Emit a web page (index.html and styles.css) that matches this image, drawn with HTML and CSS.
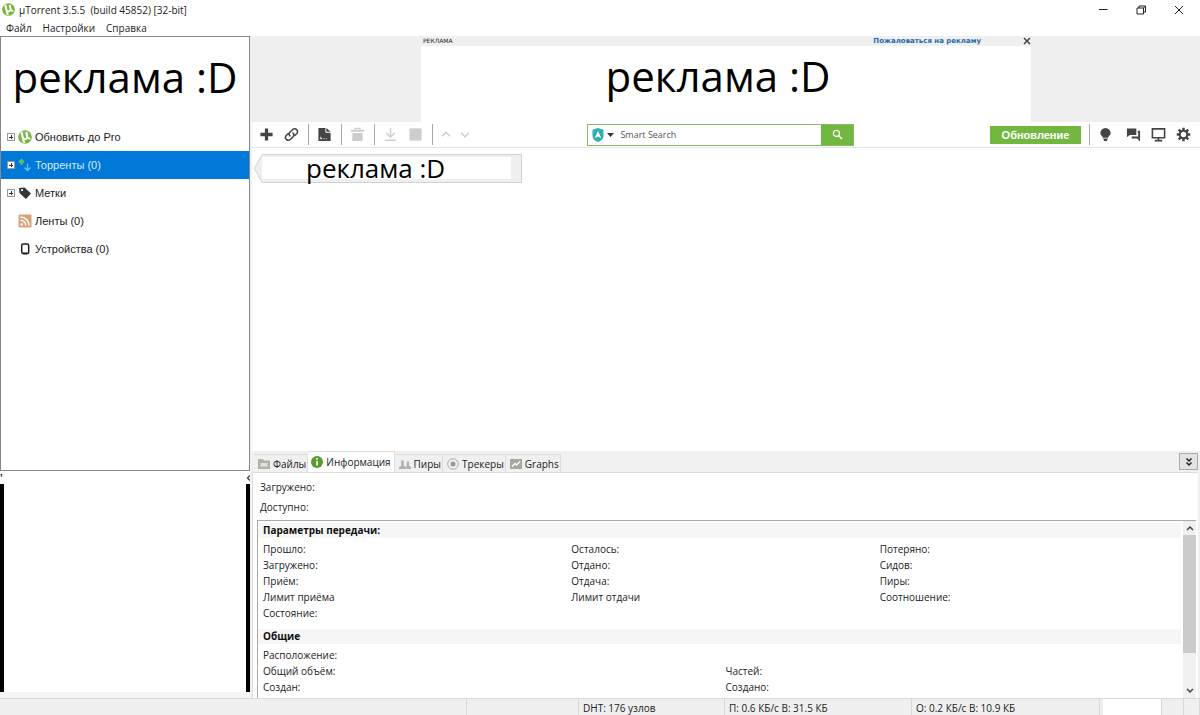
FILE: index.html
```html
<!DOCTYPE html>
<html lang="ru">
<head>
<meta charset="utf-8">
<title>µTorrent 3.5.5</title>
<link rel="stylesheet" href="styles.css">
</head>
<body>
<svg class="defs" aria-hidden="true">
  <symbol id="logo" viewBox="0 0 16 16">
    <circle cx="8" cy="8" r="7.800" fill="#76b83f"/>
    <path d="M2.700 2.600l2.600-.8 1.200 5.900c.3 1.200.9 1.800 1.800 1.600.9-.2 1.100-1 .9-2L8.200 2.700l2.500-.6 1.100 5.200c.2 1 .6 1.500 2 1.500l.6 1.700c-1.800.5-3 .2-3.600-.7-.6 1.300-1.900 2-3.400 1.700l.8 3.500-2.500-.6z" fill="#fff"/>
  </symbol>
</svg>
<div class="app">
  <header class="titlebar">
    <svg class="title-logo"><use href="#logo"/></svg>
    <h1 class="title">µTorrent 3.5.5&nbsp; (build 45852) [32-bit]</h1>
    <div class="window-buttons">
      <button class="window-button" aria-label="Свернуть"><svg viewBox="0 0 10 10"><path d="M1 4.500h8.500"/></svg></button>
      <button class="window-button" aria-label="Развернуть"><svg viewBox="0 0 10 10"><path d="M1 3h6.500v6H1zM3 3V1h6.500v6h-2M7.500 3l2-2"/></svg></button>
      <button class="window-button" aria-label="Закрыть"><svg viewBox="0 0 10 10"><path d="M1 1l8 8M9 1l-8 8"/></svg></button>
    </div>
  </header>
  <nav class="menubar">
    <button class="menu">Файл</button>
    <button class="menu">Настройки</button>
    <button class="menu">Справка</button>
  </nav>
  <div class="body">
    <aside class="left">
      <div class="sidebar">
        <p class="ad-large ad-side">реклама :D</p>
        <ul class="tree">
          <li><button class="node"><span class="expander"></span><svg class="node-icon"><use href="#logo"/></svg>Обновить до Pro</button></li>
          <li><button class="node selected"><span class="expander"></span><svg class="node-icon" viewBox="0 0 14 14"><path d="M3.500 7V2M1 4.500L3.500 2 6 4.500" stroke="#5fbf68" stroke-width="2" fill="none"/><path d="M9.500 5.500V12M6.500 9.500l3 3 3-3" stroke="#6bbdf2" stroke-width="1.300" fill="none"/></svg>Торренты (0)</button></li>
          <li><button class="node"><span class="expander"></span><svg class="node-icon" viewBox="0 0 14 14"><path fill="#30363a" fill-rule="evenodd" d="M1 2l5.500-.5 6.500 6L8 13 1.500 7zM4 3a1 1 0 100 2.200A1 1 0 004 3z"/></svg>Метки</button></li>
          <li><button class="node"><span class="expander none"></span><svg class="node-icon" viewBox="0 0 14 14"><rect x=".5" y=".5" width="13" height="13" rx="1" fill="#d9a27c"/><circle cx="3.700" cy="10.500" r="1.300" fill="#fff"/><path d="M2.500 6.200a5.300 5.300 0 015.300 5.300M2.500 3a8.500 8.500 0 018.500 8.500" stroke="#fff" stroke-width="1.500" fill="none"/></svg>Ленты (0)</button></li>
          <li><button class="node"><span class="expander none"></span><svg class="node-icon" viewBox="0 0 14 14"><rect x="3.700" y="2" width="7" height="9.500" rx="1.500" fill="#fff" stroke="#222" stroke-width="1.500"/><path d="M5 11.500h4.500" stroke="#222" stroke-width="1.800"/></svg>Устройства (0)</button></li>
        </ul>
      </div>
      <div class="side-bottom">
        <div class="side-marks"><span>'</span><svg viewBox="0 0 4 8"><path d="M4 1.500L1.500 4 4 6.500" fill="none" stroke="#444" stroke-width="1.400"/></svg></div>
        <div class="side-frame"></div>
      </div>
    </aside>
    <main class="right">
      <section class="banner">
        <div class="banner-box">
          <div class="banner-head"><span class="banner-tag">РЕКЛАМА</span><a class="banner-link" href="#">Пожаловаться на рекламу</a><button class="banner-close" aria-label="Закрыть рекламу"><svg viewBox="0 0 8 8"><path d="M1 1l6 6M7 1L1 7" stroke="#444" stroke-width="1.500"/></svg></button></div>
          <p class="ad-large ad-banner">реклама :D</p>
        </div>
      </section>
      <div class="toolbar">
        <button class="tool" aria-label="Добавить торрент"><svg viewBox="0 0 16 16"><path d="M8 1.500v13M1.500 8h13" stroke-width="3.500"/></svg></button>
        <button class="tool" aria-label="Добавить ссылку"><svg viewBox="0 0 16 16" class="round"><path stroke-width="1.600" d="M6.500 9.500C5 8 5.300 6.700 6.300 5.700l2.900-3c2.900-2.500 7 1.300 4.400 4.300L11.500 9M9.500 6.500C11 8 10.700 9.300 9.700 10.300l-2.900 3C3.900 15.800-.2 12 2.400 9L4.500 7"/></svg></button>
        <span class="divider"></span>
        <button class="tool" aria-label="Создать торрент"><svg viewBox="0 0 16 16"><path class="fill" d="M1.500 1H9v5h5.500v9h-13zM10 1l4.500 4H10z"/><path d="M4 10.500v2h1.500M7 12.500h1M9.500 12.500h1" stroke="#fff" stroke-width="1"/></svg></button>
        <span class="divider"></span>
        <button class="tool off" aria-label="Удалить" disabled><svg viewBox="0 0 16 16"><path class="fill" d="M2.500 6.500h11V15h-11zM1 3h14v2H1z"/><path d="M5.500 3V1.500h5V3" stroke-width="1.500"/></svg></button>
        <span class="divider"></span>
        <button class="tool off" aria-label="Запустить" disabled><svg viewBox="0 0 16 16"><path d="M8 1v10M3.500 6.500L8 11l4.500-4.500M2 14.200h12" stroke-width="1.500"/></svg></button>
        <button class="tool off" aria-label="Остановить" disabled><svg viewBox="0 0 16 16"><path class="fill" d="M1.500 1.500h13v13h-13z"/></svg></button>
        <span class="divider"></span>
        <button class="tool off small" aria-label="Вверх" disabled><svg viewBox="0 0 16 16"><path d="M3.500 10L8 5.500l4.500 4.500" stroke-width="1.800"/></svg></button>
        <button class="tool off small" aria-label="Вниз" disabled><svg viewBox="0 0 16 16"><path d="M3.500 6L8 10.500 12.500 6" stroke-width="1.800"/></svg></button>
        <span class="gap-before"></span>
        <form class="search">
          <svg class="shield" viewBox="0 0 12 14"><path fill="#31aeb2" d="M6 0l5.500 1.800v6C11.500 11 9 13 6 14 3 13 .5 11 .5 7.800v-6z"/><path fill="#fff" d="M6 3l3.200 7L6 8.500 2.800 10z"/></svg>
          <svg class="caret" viewBox="0 0 7 4"><path d="M0 0h7L3.500 4z" fill="#333"/></svg>
          <input class="search-input" type="text" placeholder="Smart Search" aria-label="Smart Search">
          <button class="search-go" type="button" aria-label="Найти"><svg viewBox="0 0 12 12"><circle cx="4.800" cy="4.800" r="3.300" fill="none" stroke="#fff" stroke-width="1.300"/><path d="M7 7l4 4" stroke="#fff" stroke-width="1.600"/></svg></button>
        </form>
        <span class="gap-after"></span>
        <button class="upgrade">Обновление</button>
        <span class="divider"></span>
        <button class="tool tip" aria-label="Совет"><svg viewBox="0 0 16 16"><path class="fill" d="M8 1a5.500 5.500 0 00-5.500 5.500c0 2.500 2.200 3 2.800 5h5.400c.6-2 2.800-2.500 2.800-5A5.500 5.500 0 008 1zM5.500 12.300h5L9.500 15h-3z"/></svg></button>
        <button class="tool" aria-label="Чат"><svg viewBox="0 0 16 16"><path class="fill" d="M1 1.500h10v7H4L1 11z"/><path d="M12.500 5H14v6.200H6" stroke-width="2"/><path class="fill" d="M11.500 12H15v3.500z"/></svg></button>
        <button class="tool" aria-label="Устройство"><svg viewBox="0 0 16 16"><path d="M1.500 2h13v9.500h-13zM4 14.500h8M8 11.500v3" stroke-width="1.700"/></svg></button>
        <button class="tool" aria-label="Настройки"><svg viewBox="0 0 16 16"><path stroke-width="2.600" d="M8 .8v3M8 12.200v3M.8 8h3M12.200 8h3M2.900 2.900L5 5M11 11l2.100 2.100M2.900 13.100L5 11M11 5l2.100-2.100"/><circle cx="8" cy="8" r="4" fill="#fff" stroke-width="2.200"/></svg></button>
      </div>
      <section class="list">
        <div class="ribbon">
          <svg class="ribbon-tip" viewBox="0 0 8 29" preserveAspectRatio="none"><path d="M8 .5L.5 14.500 8 28.500" fill="#efefef" stroke="#d2d2d2"/></svg>
          <div class="ribbon-frame"><p class="ribbon-text">реклама :D</p></div>
        </div>
      </section>
      <section class="details">
        <div class="tabs">
          <button class="tab"><svg viewBox="0 0 12 12"><path fill="#aeb3a9" d="M0 1h5l1 1.500h6V11H0z"/><path fill="#dfe2dc" d="M2.500 5h7v3.500h-7z"/></svg>Файлы</button>
          <button class="tab active"><svg viewBox="0 0 12 12"><circle cx="6" cy="6" r="6" fill="#599b31"/><path d="M6 2v1.800M6 5v4.500" stroke="#fff" stroke-width="1.600"/></svg>Информация</button>
          <button class="tab"><svg viewBox="0 0 12 12"><path fill="#aeb3a9" d="M0 11V9l2.200-1V2.500h2.500V8L7 9v2zM7.500 11V9L6.700 8.500l1-.7V3.500H10v4.300l2 1.200v2z"/></svg>Пиры</button>
          <button class="tab"><svg viewBox="0 0 12 12"><circle cx="6" cy="6" r="5.300" fill="none" stroke="#aaa"/><circle cx="6" cy="6" r="2.500" fill="#999"/></svg>Трекеры</button>
          <button class="tab"><svg viewBox="0 0 12 12"><path fill="#a3a99f" d="M0 1h12v10H0z"/><path d="M2 8.500l3-3 1.500 1.500L10 3.500" fill="none" stroke="#fff" stroke-width="1.300"/></svg>Graphs</button>
          <button class="collapse" aria-label="Свернуть панель"><svg viewBox="0 0 8 10"><path d="M1.500 1.500L4 4l2.500-2.500M1.500 5.500L4 8l2.500-2.500" fill="none" stroke="#222" stroke-width="1.500"/></svg></button>
        </div>
        <div class="info">
          <p class="progress-label">Загружено:</p>
          <p class="progress-label">Доступно:</p>
          <div class="info-box">
            <div class="info-content">
              <h2 class="info-title">Параметры передачи:</h2>
              <div class="columns three">
                <ul><li>Прошло:</li><li>Загружено:</li><li>Приём:</li><li>Лимит приёма</li><li>Состояние:</li></ul>
                <ul><li>Осталось:</li><li>Отдано:</li><li>Отдача:</li><li>Лимит отдачи</li></ul>
                <ul><li>Потеряно:</li><li>Сидов:</li><li>Пиры:</li><li>Соотношение:</li></ul>
              </div>
              <h2 class="info-title">Общие</h2>
              <div class="columns two">
                <ul><li>Расположение:</li><li>Общий объём:</li><li>Создан:</li></ul>
                <ul><li>&nbsp;</li><li>Частей:</li><li>Создано:</li></ul>
              </div>
            </div>
            <div class="scrollbar">
              <button class="scroll-button" aria-label="Прокрутить вверх"><svg viewBox="0 0 8 6"><path d="M1 5l3-3 3 3"/></svg></button>
              <div class="track"><div class="thumb"></div></div>
              <button class="scroll-button" aria-label="Прокрутить вниз"><svg viewBox="0 0 8 6"><path d="M1 1l3 3 3-3"/></svg></button>
            </div>
          </div>
        </div>
      </section>
    </main>
  </div>
  <footer class="status">
    <span class="cell"></span><span class="cell"></span><span class="cell">DHT: 176 узлов</span><span class="cell">П: 0.6 КБ/с В: 31.5 КБ</span><span class="cell">О: 0.2 КБ/с В: 10.9 КБ</span><span class="cell blank"></span><span class="cell"></span><span class="cell"></span>
  </footer>
</div>
</body>
</html>
```
FILE: styles.css
```css
* { box-sizing: border-box; }
body { margin: 0; background: #fff; color: #222; font: 10px/16px "Open Sans", "Noto Sans", sans-serif; }
button { margin: 0; padding: 0; border: 0; background: none; color: inherit; font: inherit; }
ul, p, h1, h2 { margin: 0; padding: 0; list-style: none; font-size: inherit; }
.defs { display: none; }
.app { display: flex; flex-direction: column; min-height: 100vh; }

.titlebar { display: flex; align-items: center; height: 19px; padding: 0 2px; gap: 4px; }
.title-logo { width: 13px; height: 13px; }
.title { flex: 1; font-weight: 400; }
.window-buttons { display: flex; }
.window-button { display: flex; align-items: center; justify-content: center; width: 38px; height: 18px; }
.window-button svg { width: 10px; height: 10px; fill: none; stroke: #222; }
.menubar { display: flex; gap: 11px; height: 17px; padding-left: 6px; }

.body { display: flex; flex: 1; }
.left { display: flex; flex-direction: column; width: 250px; }
.sidebar { flex: 1; border: 1px solid #888; }
.ad-large { color: #000; font: 42px/60px "Open Sans", sans-serif; text-align: center; white-space: nowrap; }
.ad-side { padding: 10px 0 16px; }
.node { display: flex; align-items: center; width: 100%; height: 28px; padding-left: 6px; font: 11px/16px "Liberation Sans", sans-serif; }
.node.selected { background: #0078d7; color: #d8ecff; }
.expander { width: 8px; height: 8px; margin-right: 3px; border: 1px solid #999; background: linear-gradient(#333, #333) center / 4px 1px no-repeat, linear-gradient(#333, #333) center / 1px 4px no-repeat, #fff; }
.expander.none { visibility: hidden; }
.node-icon { width: 14px; height: 14px; margin-right: 3px; }
.side-bottom { display: flex; flex-direction: column; height: 227px; padding-bottom: 6px; background: linear-gradient(#fff, #fff) top / 100% 221px no-repeat, #f4f4f4; }
.side-marks { display: flex; align-items: center; justify-content: space-between; height: 13px; overflow: hidden; font-weight: 700; }
.side-marks svg { width: 4px; height: 8px; }
.side-frame { flex: 1; border: solid #000; border-width: 0 4px; }

.right { display: flex; flex: 1; flex-direction: column; min-width: 0; border-left: 2px solid #f0f0f0; }
.banner { display: flex; justify-content: center; height: 86px; background: #efefef; }
.banner-box { width: 610px; background: #fff; }
.banner-head { display: flex; align-items: center; height: 10px; background: #efefef; }
.banner-tag { flex: 1; padding-left: 2px; font: 6px/10px "DejaVu Sans", sans-serif; }
.banner-link { color: #2668a8; font: bold 7px/10px "DejaVu Sans", sans-serif; text-decoration: none; }
.banner-close { display: flex; width: 8px; margin-left: 42px; }
.banner-close svg { width: 8px; height: 8px; }
.ad-banner { padding-right: 16px; }

.toolbar { display: flex; align-items: center; height: 26px; padding: 0 8px 0 6px; gap: 8px; border-bottom: 1px solid #e6e6e6; }
.tool { display: flex; width: 17px; justify-content: center; color: #444; }
.tool svg { width: 15px; height: 15px; fill: none; stroke: currentColor; }
.tool .fill { fill: currentColor; stroke: none; }
.tool.off { color: #cdcdcd; }
.tool.small { width: 11px; }
.tool.small svg { width: 14px; flex: none; }
.tool.tip { margin-right: 3px; }
.round { stroke-linecap: round; }
.divider { width: 1px; height: 21px; margin-right: -1px; background: #aaa; }
.gap-before { flex: 6; }
.gap-after { flex: 7; }
.search { display: flex; align-items: center; width: 267px; height: 22px; margin: 0 -8px; padding-left: 4px; border: 1px solid #8ab868; background: #fff; }
.shield { width: 12px; height: 14px; }
.caret { width: 7px; height: 4px; margin: 0 5px 0 3px; }
.search-input { flex: 1; min-width: 0; height: 18px; padding: 0 1px; border: 0; outline: 0; background: none; color: #555; font: 9px/16px "Open Sans", sans-serif; }
.search-input::placeholder { color: #555; opacity: 1; }
.search-go { display: flex; align-items: center; justify-content: center; width: 32px; height: 20px; background: #72b840; }
.search-go svg { width: 11px; height: 11px; }
.upgrade { width: 91px; height: 18px; background: #72b840; color: #fff; font: bold 11px/18px "Liberation Sans", sans-serif; }

.list { flex: 1; padding: 6px 2px; }
.ribbon { display: flex; width: 268px; height: 29px; }
.ribbon-tip { width: 8px; height: 29px; }
.ribbon-frame { flex: 1; padding: 2px 10px 3px 0; border: 1px solid #d2d2d2; border-left: 0; background: #efefef; }
.ribbon-text { height: 22px; padding-left: 44px; background: #fff; color: #000; font: 26px/22px "Open Sans", sans-serif; white-space: nowrap; }

.details { display: flex; flex-direction: column; height: 247px; padding-right: 2px; background: #f0f0f0; }
.tabs { display: flex; align-items: flex-end; height: 22px; padding-left: 2px; border-bottom: 1px solid #ddd; }
.tab { display: flex; align-items: center; height: 18px; padding: 0 1px 0 4px; gap: 3px; border: 1px solid #ddd; border-width: 1px 1px 0 0; }
.tab svg { width: 12px; height: 12px; }
.tab.active { height: 21px; padding: 0 3px; background: #fff; }
.collapse { display: flex; align-items: center; justify-content: center; width: 19px; height: 17px; margin: 0 0 2px auto; border: 1px solid #aaa; background: #e3e3e3; }
.collapse svg { width: 8px; height: 10px; }
.info { display: flex; flex: 1; flex-direction: column; min-height: 0; padding: 4px 2px 0 4px; border-left: 1px solid #ddd; background: #fff; }
.progress-label { height: 20px; padding: 2px 3px; }
.info-box { display: flex; flex: 1; min-height: 0; margin-top: 3px; border: solid #aaa; border-width: 1px 0 0 1px; }
.info-content { flex: 1; padding-top: 2px; }
.info-title { height: 15px; margin: 0 2px 3px 0; padding-left: 5px; background: #f6f6f6; line-height: 15px; color: #111; }
.columns { display: grid; }
.columns li { padding-left: 5px; }
.three { grid-template-columns: repeat(3, 1fr); margin-bottom: 8px; }
.two { grid-template-columns: repeat(2, 1fr); }
.scrollbar { display: flex; flex-direction: column; width: 13px; background: #f0f0f0; }
.scroll-button { display: flex; align-items: center; justify-content: center; height: 14px; }
.scroll-button svg { width: 8px; height: 6px; fill: none; stroke: #444; stroke-width: 1.500; }
.track { flex: 1; }
.thumb { height: 79%; background: #cbcbcb; }

.status { display: grid; grid-template-columns: 467fr 112fr 146fr 187fr 188fr 62fr 22fr 16fr; height: 17px; border-top: 1px solid #d8d8d8; background: #efefef; line-height: 18px; }
.cell { padding-left: 4px; border-right: 1px solid #d8d8d8; white-space: nowrap; }
.cell.blank { background: linear-gradient(#fff, #fff) right / 58px 100% no-repeat; }
```
